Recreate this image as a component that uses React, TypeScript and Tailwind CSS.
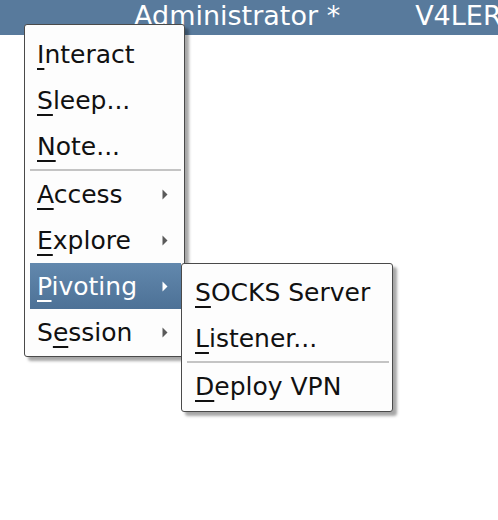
import React from "react";

type Item = { label: string; key: number; sub?: boolean; active?: boolean } | "sep";

const mainItems: Item[] = [
  { label: "Interact", key: 0 },
  { label: "Sleep...", key: 0 },
  { label: "Note...", key: 0 },
  "sep",
  { label: "Access", key: 0, sub: true },
  { label: "Explore", key: 0, sub: true },
  { label: "Pivoting", key: 0, sub: true, active: true },
  { label: "Session", key: 1, sub: true },
];

const subItems: Item[] = [
  { label: "SOCKS Server", key: 0 },
  { label: "Listener...", key: 0 },
  "sep",
  { label: "Deploy VPN", key: 0 },
];

function Label({ text, k }: { text: string; k: number }) {
  return (
    <span className="whitespace-pre">
      {text.slice(0, k)}
      <span className="underline decoration-2 underline-offset-[5px]">{text[k]}</span>
      {text.slice(k + 1)}
    </span>
  );
}

function Arrow({ light }: { light?: boolean }) {
  return (
    <svg width="6" height="11" viewBox="0 0 6 11" className="shrink-0">
      <path d="M0.5 0.5 L5.5 5.5 L0.5 10.5 Z" fill={light ? "#ffffff" : "#5a5a5a"} />
    </svg>
  );
}

function Menu({ items, padX }: { items: Item[]; padX: string }) {
  return (
    <div className="flex flex-col">
      {items.map((it, i) =>
        it === "sep" ? (
          <div key={i} className="h-[2px] ml-[5px] mr-[3px] flex items-center">
            <div className="h-[2px] w-full bg-[#c4c4c4]" />
          </div>
        ) : (
          <div
            key={i}
            className={`h-[46px] ml-[5px] mr-[3px] flex items-center justify-between ${padX} ${
              it.active ? "bg-gradient-to-b from-[#6288ad] to-[#4d7196] text-white" : "text-[#111]"
            }`}
          >
            <Label text={it.label} k={it.key} />
            {it.sub && <Arrow light={it.active} />}
          </div>
        )
      )}
    </div>
  );
}

export default function App() {
  return (
    <div
      className="relative w-[498px] h-[520px] bg-white overflow-hidden"
      style={{ fontFamily: '"DejaVu Sans", "Liberation Sans", sans-serif' }}
    >
      {/* title bar */}
      <div className="h-[35px] bg-[#587a9c] text-white text-[27px] leading-[27px] flex items-end pb-[6px] pl-[134px] whitespace-nowrap">
        <span>Administrator *</span>
        <span className="ml-[75px]">V4LER</span>
      </div>

      {/* main popup */}
      <div className="absolute left-[24px] top-[24px] w-[161px] rounded-[3px] border border-[#4a4a4a] bg-[#fdfdfd] pt-[6px] pb-[1px] text-[25px] leading-none shadow-[4px_4px_3px_rgba(0,0,0,0.35)]">
        <Menu items={mainItems} padX="pl-[7px] pr-[13px]" />
      </div>

      {/* submenu */}
      <div className="absolute left-[181px] top-[263px] w-[212px] rounded-[3px] border border-[#4a4a4a] bg-[#fdfdfd] pt-[5px] pb-[2px] text-[25px] leading-none shadow-[4px_4px_3px_rgba(0,0,0,0.35)]">
        <Menu items={subItems} padX="pl-[8px] pr-[10px]" />
      </div>
    </div>
  );
}
